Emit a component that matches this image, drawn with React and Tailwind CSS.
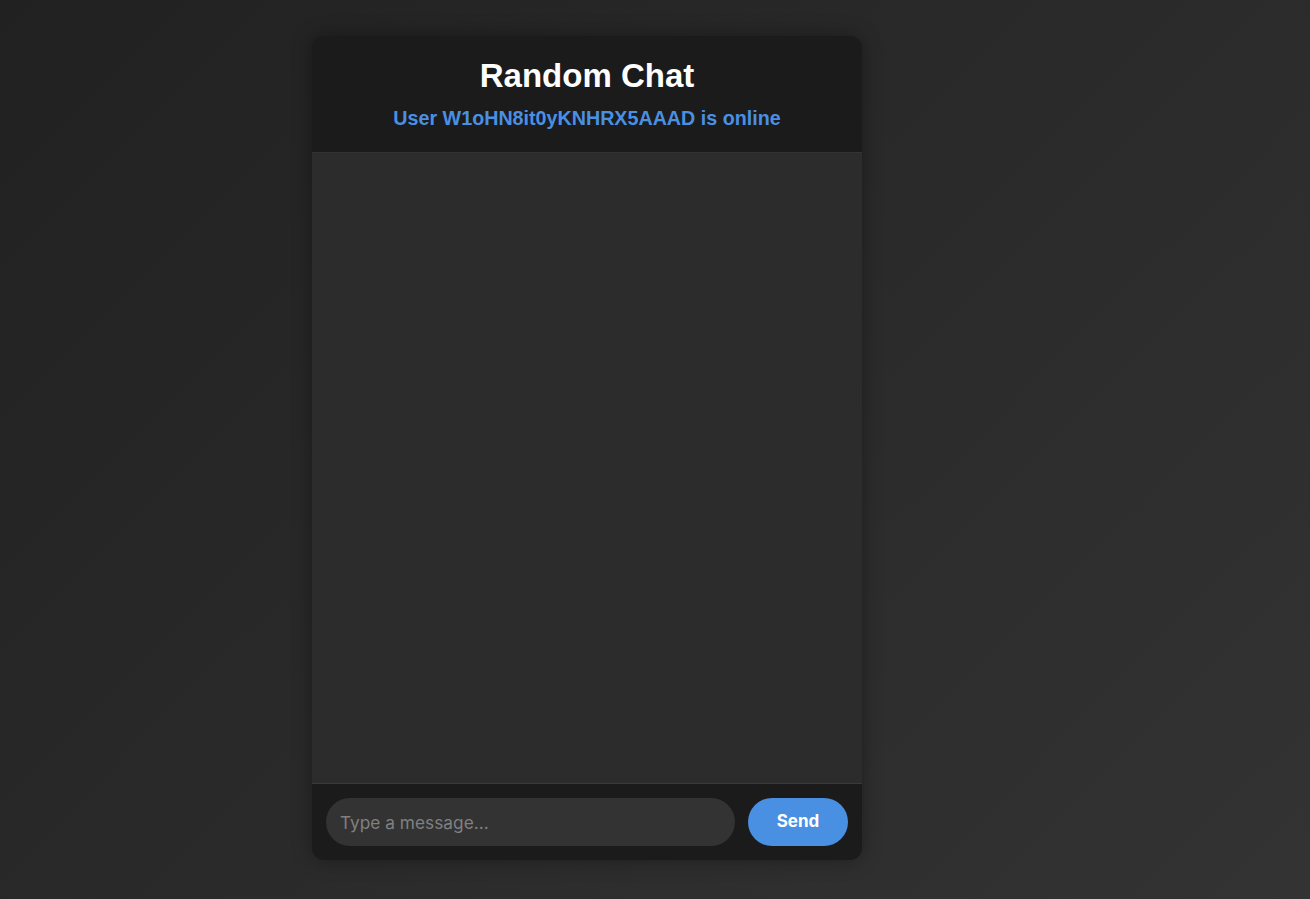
export default function App() {
  return (
    <div className="min-h-screen w-full bg-[linear-gradient(135deg,#212121,#333333)] pl-[312px] pt-9 font-['Liberation_Sans',Arial,sans-serif]">
      <div className="flex h-[824px] w-[550px] flex-col overflow-hidden rounded-xl bg-[#1b1b1b] shadow-[0_0_20px_rgba(0,0,0,0.35)]">
        {/* Header */}
        <div className="flex h-[117px] shrink-0 flex-col items-center border-b border-[#333] pt-[20px]">
          <h1 className="text-[33px] font-bold leading-[40px] text-white">Random Chat</h1>
          <p className="mt-[10px] text-[19.7px] font-bold leading-[24px] text-[#4a90e2]">
            User W1oHN8it0yKNHRX5AAAD is online
          </p>
        </div>

        {/* Messages */}
        <div className="flex-1 overflow-y-auto border-b border-[#3a3a3a] bg-[#2c2c2c]"></div>

        {/* Input */}
        <div className="flex shrink-0 items-center gap-[13px] px-[14px] py-[14px]">
          <input
            placeholder="Type a message..."
            className="h-[48px] flex-1 rounded-full bg-[#333] px-[14px] font-['Inter',sans-serif] text-[17.3px] text-white outline-none placeholder:text-[#808080]"
          />
          <button className="h-[48px] w-[100px] rounded-full bg-[#4a90e2] font-['Inter',sans-serif] text-[17px] font-bold text-white">
            Send
          </button>
        </div>
      </div>
    </div>
  );
}
